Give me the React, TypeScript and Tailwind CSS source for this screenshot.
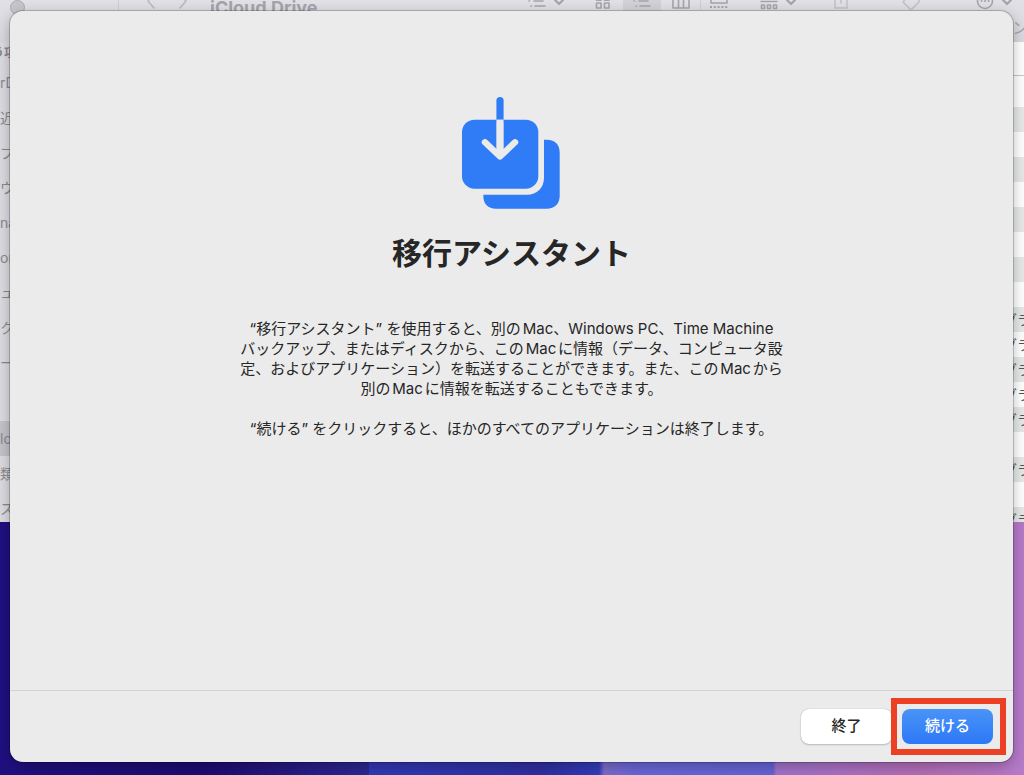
import type { ReactNode } from "react";
import clsx from "clsx";

const SIDEBAR = ["rD", "近", "プ", "ウ", "na", "or", "ュ", "ク", "ー"];
const SIDEBAR_CLOUD = ["lo", "類", "ス"];

// kind column of the file list, one entry per visible row
const ROWS = ["", "", "", "", "", "", "", "", "", "グラ", "グラ", "グラ", "グラ", "グラ", "", "グラ", "", "グラ"];

function Glyph({ width, children }: { width: number; children: ReactNode }) {
  return (
    <svg
      width={width}
      height="18"
      viewBox={`0 0 ${width} 18`}
      fill="none"
      stroke="currentColor"
      strokeWidth="1.6"
      strokeLinecap="round"
      strokeLinejoin="round"
      className="shrink-0"
      aria-hidden="true"
    >
      {children}
    </svg>
  );
}

function ListGlyph() {
  return (
    <Glyph width={18}>
      <path d="M1 4.500h.5M1 9h.5M6 9h9M3 14h.5M7 14h10" />
    </Glyph>
  );
}

function ChevronGlyph() {
  return (
    <Glyph width={10}>
      <path d="M1 8l4 4 4-4" strokeWidth="2.200" />
    </Glyph>
  );
}

function MigrationIcon() {
  return (
    <svg width="100" height="114" viewBox="0 0 100 114" fill="none" className="mr-0.5" aria-hidden="true">
      <path
        fill="#2f7cf6"
        d="M83 43.700h3c8 0 12.700 5 12.700 13v43c0 8-5 13-13 13H35c-8 0-12.700-5-12.700-13v-1H66c10 0 17-7 17-17z"
      />
      <rect x="1" y="23.700" width="76.300" height="69" rx="12.500" fill="#2f7cf6" />
      <path fill="#2f7cf6" d="M35.400 23.700V4.600a3.600 3.600 0 0 1 7.200 0v19.100z" />
      <path
        d="M39 27.500V60M24 46.300L39 60.500l15-14.200"
        stroke="#ebebeb"
        strokeWidth="6.400"
        strokeLinecap="round"
        strokeLinejoin="round"
      />
      <path d="M35.400 23.700h7.200V56h-7.200z" fill="#ebebeb" />
    </svg>
  );
}

function FinderWindow() {
  return (
    <section className="absolute inset-x-0 -top-5 flex h-[542px] flex-col overflow-hidden bg-white">
      <header className="relative flex h-[62px] shrink-0 items-start bg-linear-to-b from-[#e5e4ea] to-[#d9d8df] text-[#a5a4aa]">
        <div className="flex h-[42px] w-[119px] items-center border-r border-[#cfced4] pt-3 pl-[10px]">
          <span className="size-[15px] rounded-full border border-[#acabb0] bg-[#c6c5ca]" />
        </div>
        <div className="flex h-[42px] w-[91px] items-center gap-6 pl-7 text-[#bab9bf]">
          <Glyph width={8}>
            <path d="M7 2L1 9l6 7" />
          </Glyph>
          <Glyph width={8}>
            <path d="M1 2l6 7-6 7" />
          </Glyph>
        </div>
        <h2 className="flex h-[42px] items-center pt-3.5 font-['Inter',sans-serif] text-lg font-bold">
          iCloud Drive
        </h2>
        <div className="ml-auto flex h-[42px] items-center">
          <ListGlyph />
          <span className="mr-[31px] ml-2 flex">
            <ChevronGlyph />
          </span>
          <Glyph width={16}>
            <path d="M1.500 3H6v5.300H1.500zM9.500 3H14v5.300H9.500zM1.500 11H6v5H1.500zM9.500 11H14v5H9.500z" />
          </Glyph>
          <span className="ml-3 flex h-full w-[38px] items-center justify-center bg-[#d2d1d7]">
            <ListGlyph />
          </span>
          <span className="flex w-10 justify-center border-r border-[#cfced4]">
            <Glyph width={18}>
              <path d="M1 2h16v14H1zM6.500 2v14M11.500 2v14" />
            </Glyph>
          </span>
          <span className="mr-8 ml-[9px] flex">
            <Glyph width={18}>
              <path d="M1 3h16v8H1z" />
              <path d="M0 15h18" strokeWidth="2.200" strokeDasharray="2 1.800" strokeLinecap="butt" />
            </Glyph>
          </span>
          <Glyph width={18}>
            <path d="M1 6h2M7 6h3M14 6h3M1 9.500h16M1.500 13h3v3.500h-3zM7.500 13h3v3.500h-3zM13.500 13h3v3.500h-3z" />
          </Glyph>
          <span className="mr-[38px] ml-2 flex">
            <ChevronGlyph />
          </span>
          <span className="flex text-[#c3c2c8]">
            <Glyph width={14}>
              <path d="M1 5v11h12V5M7 1v10" />
            </Glyph>
          </span>
          <span className="mr-[56px] ml-[54px] flex text-[#c3c2c8]">
            <Glyph width={18}>
              <path d="M17 5v5l-7 7-2 0-7-7 7-8" />
            </Glyph>
          </span>
          <Glyph width={18}>
            <circle cx="9" cy="9" r="7.500" />
            <path d="M5.500 9h.1M9 9h.1M12.500 9h.1" strokeWidth="2" />
          </Glyph>
          <span className="mr-3 ml-2 flex">
            <ChevronGlyph />
          </span>
        </div>
        <span className="absolute -right-1 bottom-1 text-base leading-5">ン</span>
      </header>
      <div className="flex flex-1">
        <div className="w-[119px] shrink-0 bg-[#dcdbe1] text-sm leading-[35px] text-[#8a898f]">
          <h3 className="-ml-2 h-[23px] text-xs leading-[22px] font-bold">う項</h3>
          <ul>
            {SIDEBAR.map((label) => (
              <li key={label} className="h-[35px]">
                {label}
              </li>
            ))}
          </ul>
          <ul className="mt-[41px]">
            {SIDEBAR_CLOUD.map((label, i) => (
              <li key={label} className={clsx("h-[35px]", i === 0 && "bg-[#c4c3c9]")}>
                {label}
              </li>
            ))}
          </ul>
        </div>
        <div className="flex-1">
          <div className="h-[34px] border-b border-[#c8c8c8]" />
          <ul className="text-sm leading-[25px] text-[#555]">
            <li className="h-[6px]" />
            {ROWS.map((kind, i) => (
              <li key={i} className={clsx("flex h-[25px] justify-end", i % 2 === 1 && "bg-[#e6e9e8]")}>
                <span className="-mr-[7px]">{kind}</span>
              </li>
            ))}
          </ul>
        </div>
      </div>
    </section>
  );
}

export default function App() {
  return (
    <div className="relative flex min-h-screen overflow-hidden bg-[linear-gradient(to_right,#1f1080_0,#1d0b70_20%,#2d2792_36%,#3238b4_36%,#2f2fa0_53%,#323cba_58.500%,#7b6bc9_59%,#6966d6_62%,#6563d3_75.500%,#a072cb_75.800%,#b36db6_90%,#b57ac9_100%)] pt-[11px] pr-[11px] pb-[13px] pl-[10px] font-['Inter','Noto_Sans_CJK_JP',sans-serif]">
      <FinderWindow />
      <main
        className="relative flex flex-1 flex-col rounded-[13px] bg-[#ebebeb] text-[#262626] shadow-[0_0_0_1px_rgba(0,0,0,0.2),0_4px_14px_rgba(0,0,0,0.28)]"
        lang="ja"
      >
        <div className="flex flex-1 flex-col items-center pt-[85px]">
          <MigrationIcon />
          <h1 className="mt-5 text-[30px] leading-[46px] font-bold">移行アシスタント</h1>
          <div className="mt-[43px] text-center text-[15px] leading-5 whitespace-nowrap [text-autospace:normal]">
            <p>
              “移行アシスタント” を使用すると、別のMac、Windows PC、Time Machine
              <br />
              バックアップ、またはディスクから、このMacに情報（データ、コンピュータ設
              <br />
              定、およびアプリケーション）を転送することができます。また、このMacから
              <br />
              別のMacに情報を転送することもできます。
            </p>
            <p className="mt-5">“続ける” をクリックすると、ほかのすべてのアプリケーションは終了します。</p>
          </div>
        </div>
        <footer className="flex h-[72px] items-center justify-end gap-[10px] border-t border-[#d2d2d2] pr-5 text-[15px] font-medium">
          <button
            type="button"
            className="h-[35px] w-[91px] rounded-lg bg-white shadow-[0_0_1px_rgba(0,0,0,0.3),0_1px_2px_rgba(0,0,0,0.2)]"
          >
            終了
          </button>
          <div className="relative">
            <button
              type="button"
              className="block h-[35px] w-[91px] rounded-lg bg-linear-to-b from-[#4a93f8] to-[#2c78f6] text-white"
            >
              続ける
            </button>
            <span className="pointer-events-none absolute -inset-y-[11px] -right-[13px] -left-[11px] border-[6px] border-[#eb4024]" />
          </div>
        </footer>
      </main>
    </div>
  );
}
